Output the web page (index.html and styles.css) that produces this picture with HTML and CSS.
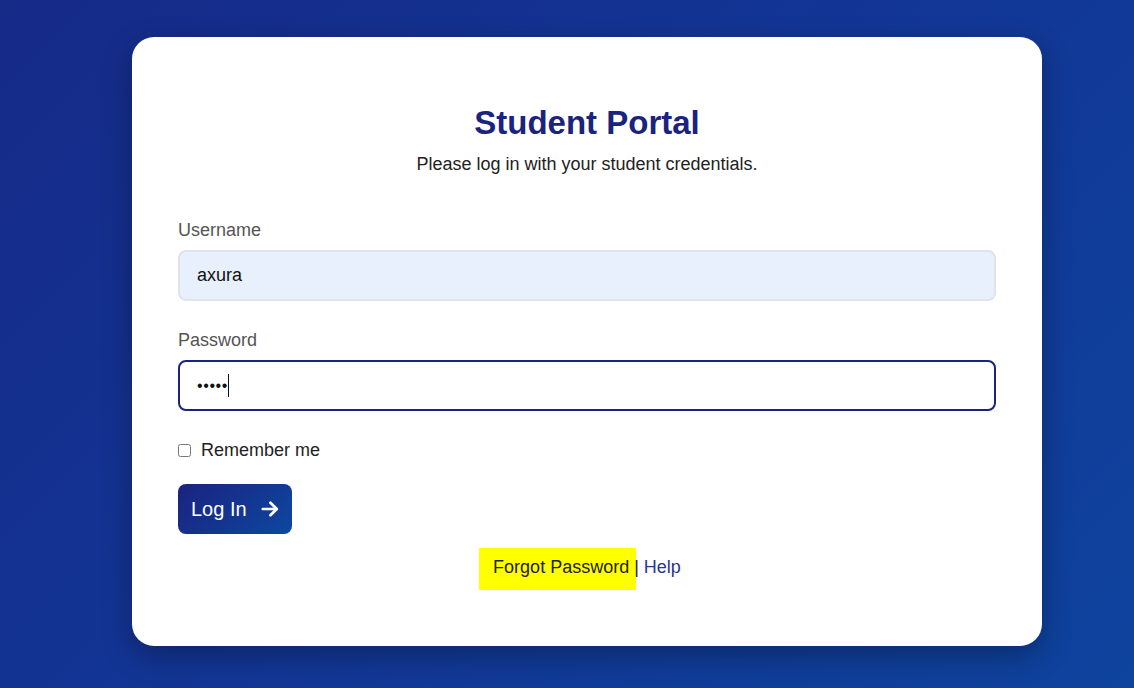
FILE: index.html
```html
<!DOCTYPE html>
<html lang="en">
<head>
<meta charset="utf-8">
<title>Student Portal</title>
<link rel="stylesheet" href="styles.css">
</head>
<body>
<main class="card">
  <h1 class="title">Student Portal</h1>
  <p class="subtitle">Please log in with your student credentials.</p>
  <form class="form">
    <div class="field">
      <label class="label" for="username">Username</label>
      <input class="input input-filled" id="username" type="text" value="axura">
    </div>
    <div class="field">
      <label class="label" for="password">Password</label>
      <div class="input-wrap">
        <input class="input input-focus" id="password" type="password" value="axura">
        <span class="caret"></span>
      </div>
    </div>
    <label class="remember"><input class="check" type="checkbox"> Remember me</label>
    <button class="btn" type="button"><span>Log In</span>
      <svg class="btn-icon" viewBox="0 0 20 20" width="18" height="18" fill="none" stroke="#fff" stroke-width="3" stroke-linecap="round" stroke-linejoin="round"><path d="M2 10h15.5"/><path d="M10.5 3l7 7-7 7"/></svg>
    </button>
  </form>
  <div class="links"><a class="link-forgot" href="#">Forgot Password</a> | <a class="link-help" href="#">Help</a></div>
</main>
</body>
</html>
```
FILE: styles.css
```css
* { box-sizing: border-box; }
html, body { margin: 0; height: 100%; }
body {
  font-family: "Liberation Sans", Arial, sans-serif;
  background: linear-gradient(135deg, #162a88 0%, #123696 50%, #0e439e 100%);
  padding: 37px 0 0 132px;
  overflow: hidden;
}
.card {
  width: 910px;
  height: 609px;
  background: #fff;
  border-radius: 22px;
  box-shadow: 0 10px 30px rgba(0, 0, 0, 0.3);
  padding: 66px 46px 0;
}
.title {
  margin: 0;
  text-align: center;
  font-size: 33px;
  line-height: 40px;
  font-weight: 700;
  color: #1a237e;
}
.subtitle {
  margin: 10px 0 0;
  text-align: center;
  font-size: 18px;
  line-height: 22px;
  color: #222;
}
.form { margin-top: 44px; display: flex; flex-direction: column; align-items: flex-start; }
.field { width: 100%; margin-bottom: 28px; display: flex; flex-direction: column; }
.label { font-size: 18px; line-height: 22px; color: #555; margin-bottom: 9px; }
.input-wrap { position: relative; width: 100%; }
.input {
  display: block;
  width: 100%;
  height: 51px;
  border-radius: 8px;
  border: 2px solid #dfe3ea;
  padding: 0 17px;
  font-family: "Liberation Sans", Arial, sans-serif;
  font-size: 18px;
  color: #111;
  outline: none;
}
.input-filled { background: #e8f0fe; }
.input-focus { border-color: #1a237e; background: #fff; font-size: 16px; letter-spacing: 0.6px; }
.caret {
  position: absolute;
  left: 50px;
  top: 14px;
  width: 1px;
  height: 23px;
  background: #111;
}
.remember {
  display: flex;
  align-items: center;
  gap: 10px;
  font-size: 18px;
  line-height: 22px;
  color: #222;
}
.check { margin: 0; width: 13px; height: 13px; }
.btn {
  margin-top: 23px;
  height: 50px;
  border: none;
  border-radius: 8px;
  background: linear-gradient(135deg, #1a237e, #0d47a1);
  color: #fff;
  font-family: "Liberation Sans", Arial, sans-serif;
  font-size: 20px;
  white-space: nowrap;
  display: flex;
  align-items: center;
  padding: 0 13px;
  gap: 14px;
}
.btn-icon { display: block; flex: none; }
.links {
  margin-top: 22px;
  text-align: center;
  font-size: 18px;
  line-height: 22px;
  color: #222;
}
.links a { text-decoration: none; }
.link-forgot {
  color: #222;
  background: #ffff00;
  padding: 9px 7px 13px 14px;
  margin: 0 -7px 0 -14px;
}
.link-help { color: #283593; }
```
